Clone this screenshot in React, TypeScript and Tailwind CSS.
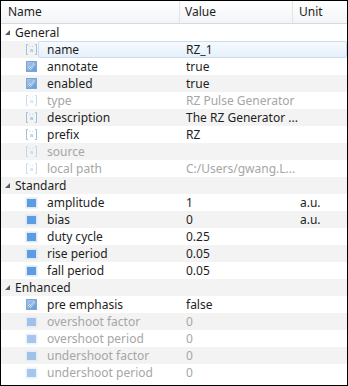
import React from "react";

type Kind = "str" | "chk" | "num";
type Row =
  | { group: string }
  | { name: string; value?: string; unit?: string; kind: Kind; disabled?: boolean; selected?: boolean };

const rows: Row[] = [
  { group: "General" },
  { name: "name", value: "RZ_1", kind: "str", selected: true },
  { name: "annotate", value: "true", kind: "chk" },
  { name: "enabled", value: "true", kind: "chk" },
  { name: "type", value: "RZ Pulse Generator", kind: "str", disabled: true },
  { name: "description", value: "The RZ Generator ...", kind: "str" },
  { name: "prefix", value: "RZ", kind: "str" },
  { name: "source", value: "", kind: "str", disabled: true },
  { name: "local path", value: "C:/Users/gwang.L...", kind: "str", disabled: true },
  { group: "Standard" },
  { name: "amplitude", value: "1", unit: "a.u.", kind: "num" },
  { name: "bias", value: "0", unit: "a.u.", kind: "num" },
  { name: "duty cycle", value: "0.25", kind: "num" },
  { name: "rise period", value: "0.05", kind: "num" },
  { name: "fall period", value: "0.05", kind: "num" },
  { group: "Enhanced" },
  { name: "pre emphasis", value: "false", kind: "chk" },
  { name: "overshoot factor", value: "0", kind: "num", disabled: true },
  { name: "overshoot period", value: "0", kind: "num", disabled: true },
  { name: "undershoot factor", value: "0", kind: "num", disabled: true },
  { name: "undershoot period", value: "0", kind: "num", disabled: true },
];

function Icon({ kind, disabled }: { kind: Kind; disabled?: boolean }) {
  const op = disabled ? 0.55 : 1;
  if (kind === "str") {
    return (
      <svg width="13" height="13" viewBox="0 0 13 13" style={{ opacity: op }}>
        <path d="M3 1.5H1.5V11.5H3" fill="none" stroke="#9cc0e0" strokeWidth="1" />
        <path d="M10 1.5H11.5V11.5H10" fill="none" stroke="#9cc0e0" strokeWidth="1" />
        <path d="M4.5 2.5L5 4M8 2.5L7.5 4" stroke="#b8d2ea" strokeWidth="0.8" />
        <text x="6.5" y="9" textAnchor="middle" fontSize="6" fill="#8fb4d8" fontFamily="Liberation Sans, sans-serif">a</text>
      </svg>
    );
  }
  if (kind === "chk") {
    return (
      <svg width="13" height="13" viewBox="0 0 13 13" style={{ opacity: op }}>
        <defs>
          <linearGradient id="cg" x1="0" y1="0" x2="1" y2="1">
            <stop offset="0" stopColor="#a9cbef" />
            <stop offset="1" stopColor="#5f98d8" />
          </linearGradient>
        </defs>
        <rect x="1.5" y="1.5" width="10" height="10" fill="url(#cg)" stroke="#7da6d4" />
        <path d="M3.5 6.5L5.5 8.5L9.5 3.5" fill="none" stroke="#ffffff" strokeWidth="1.6" />
        <path d="M3.5 6.5L5.5 8.5L9.5 3.5" fill="none" stroke="#2f5f9e" strokeWidth="0.6" />
      </svg>
    );
  }
  return (
    <svg width="13" height="13" viewBox="0 0 13 13" style={{ opacity: op }}>
      <rect x="0.5" y="1.5" width="12" height="11" fill="#dbe8f6" />
      <rect x="2" y="3" width="9" height="8" fill="#5d9be2" />
    </svg>
  );
}

export default function App() {
  return (
    <div
      className="w-[348px] h-[386px] bg-white border border-black overflow-hidden text-[12px] text-[#1e1e1e]"
      style={{ fontFamily: '"Noto Sans", "Open Sans", sans-serif' }}
    >
      <div className="grid grid-cols-[179px_113px_1fr] h-[23px] bg-gradient-to-b from-white to-[#f2f4f7] border-b border-[#d6d9de]">
        <div className="flex items-center pl-[7px] border-r border-[#e2e4e8]">Name</div>
        <div className="flex items-center pl-[5px] border-r border-[#e2e4e8]">Value</div>
        <div className="flex items-center pl-[6px]">Unit</div>
      </div>
      <div className="flex flex-col">
        {rows.map((r, i) => {
          const bg = i % 2 === 1 ? "bg-[#f3f3f3]" : "bg-white";
          if ("group" in r) {
            return (
              <div key={i} className={`h-[17px] flex items-center ${bg}`}>
                <svg width="14" height="17" viewBox="0 0 14 17" className="shrink-0">
                  <path d="M9 6L9 11L4 11Z" fill="#595959" />
                </svg>
                <span className="leading-[15px]">{r.group}</span>
              </div>
            );
          }
          const txt = r.disabled ? "text-[#a6a6a6]" : "text-[#1e1e1e]";
          return (
            <div key={i} className={`h-[17px] flex items-center ${bg}`}>
              <div className="w-[24px] shrink-0" />
              <div className="w-[13px] h-[17px] shrink-0 flex items-center">
                <Icon kind={r.kind} disabled={r.disabled} />
              </div>
              <div
                className={`flex-1 h-[17px] grid grid-cols-[142px_113px_1fr] items-center ${
                  r.selected
                    ? "bg-gradient-to-b from-[#f6fafe] to-[#e6f0fa] border border-[#c9def3] rounded-[2px]"
                    : "border border-transparent"
                }`}
              >
                <span className={`pl-[8px] leading-[15px] whitespace-nowrap ${txt}`}>{r.name}</span>
                <span className={`pl-[5px] leading-[15px] whitespace-nowrap ${txt}`}>{r.value}</span>
                <span className={`pl-[6px] leading-[15px] whitespace-nowrap ${txt}`}>{r.unit ?? ""}</span>
              </div>
            </div>
          );
        })}
      </div>
    </div>
  );
}
